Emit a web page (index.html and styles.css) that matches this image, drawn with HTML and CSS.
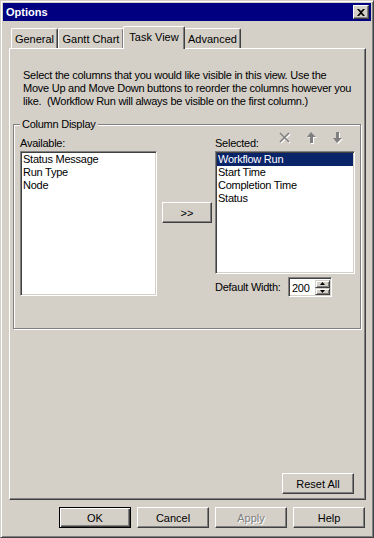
FILE: index.html
```html
<!DOCTYPE html>
<html lang="en">
<head>
    <meta charset="UTF-8">
    <title>Options</title>
    <link rel="stylesheet" href="styles.css">
</head>
<body>
    <div class="window">
        <div class="titlebar">
            <span class="title">Options</span>
            <button class="close-btn">
                <svg width="8" height="7" viewBox="0 0 8 7"><path d="M0 0h2l2 2 2-2h2L5 3.5 8 7H6L4 5 2 7H0l3-3.5z" fill="#000"/></svg>
            </button>
        </div>
        <div class="client">
            <div class="tabs">
                <div class="tab tab-general">General</div>
                <div class="tab tab-gantt">Gantt Chart</div>
                <div class="tab tab-task active">Task View</div>
                <div class="tab tab-advanced">Advanced</div>
            </div>
            <div class="panel">
                <p class="intro">Select the columns that you would like visible in this view. Use the<br>Move Up and Move Down buttons to reorder the columns however you<br>like.&nbsp; (Workflow Run will always be visible on the first column.)</p>
                <div class="group">
                    <span class="group-title">Column Display</span>
                    <div class="columns">
                        <div class="col-available">
                            <div class="field-label">Available:</div>
                            <ul class="listbox available-list">
                                <li>Status Message</li>
                                <li>Run Type</li>
                                <li>Node</li>
                            </ul>
                        </div>
                        <div class="col-move">
                            <button class="btn move-btn">&gt;&gt;</button>
                        </div>
                        <div class="col-selected">
                            <div class="selected-head">
                                <div class="field-label">Selected:</div>
                                <div class="tools">
                                    <svg class="tool" width="16" height="14" viewBox="0 0 16 14">
                                        <path d="M4 3l9 9M13 3l-9 9" stroke="#fff" stroke-width="1.6"/>
                                        <path d="M3 2l9 9M12 2l-9 9" stroke="#808080" stroke-width="1.6"/>
                                    </svg>
                                    <svg class="tool" width="16" height="14" viewBox="0 0 16 14">
                                        <path d="M9 2l5 5h-3v6H8V7H5z" fill="#fff"/>
                                        <path d="M8 1l5 5h-3v6H7V6H4z" fill="#808080"/>
                                    </svg>
                                    <svg class="tool" width="16" height="14" viewBox="0 0 16 14">
                                        <path d="M9 13l5-5h-3V2H8v6H5z" fill="#fff"/>
                                        <path d="M8 12l5-5h-3V1H7v6H4z" fill="#808080"/>
                                    </svg>
                                </div>
                            </div>
                            <ul class="listbox selected-list">
                                <li class="current">Workflow Run</li>
                                <li>Start Time</li>
                                <li>Completion Time</li>
                                <li>Status</li>
                            </ul>
                            <div class="width-row">
                                <span class="width-label">Default Width:</span>
                                <div class="spin">
                                    <span class="spin-value">200</span>
                                    <div class="spin-btns">
                                        <span class="spin-btn"><svg width="5" height="3" viewBox="0 0 5 3"><path d="M2.5 0L5 3H0z" fill="#000"/></svg></span>
                                        <span class="spin-btn"><svg width="5" height="3" viewBox="0 0 5 3"><path d="M0 0h5L2.5 3z" fill="#000"/></svg></span>
                                    </div>
                                </div>
                            </div>
                        </div>
                    </div>
                </div>
                <div class="panel-footer">
                    <button class="btn">Reset All</button>
                </div>
            </div>
            <div class="dialog-buttons">
                <button class="btn btn-default">OK</button>
                <button class="btn">Cancel</button>
                <button class="btn disabled">Apply</button>
                <button class="btn">Help</button>
            </div>
        </div>
    </div>
</body>
</html>
```

FILE: styles.css
```css
* {
    box-sizing: border-box;
}
body {
    margin: 0;
    background: #d4d0c8;
    font-family: "Liberation Sans", Arial, sans-serif;
    font-size: 11px;
    letter-spacing: -0.25px;
    color: #000;
}
.window {
    width: 374px;
    height: 538px;
    display: flex;
    flex-direction: column;
    padding: 2px;
    border: 1px solid;
    border-color: #d4d0c8 #404040 #404040 #d4d0c8;
    box-shadow: inset 1px 1px #fff, inset -1px -1px #808080;
}
.titlebar {
    height: 18px;
    display: flex;
    align-items: center;
    justify-content: space-between;
    padding: 0 2px 0 3px;
    background: #000080;
    color: #fff;
    font-weight: bold;
    letter-spacing: 0;
}
.close-btn {
    width: 16px;
    height: 14px;
    padding: 0;
    display: flex;
    align-items: center;
    justify-content: center;
    background: #d4d0c8;
    border: 1px solid;
    border-color: #fff #404040 #404040 #fff;
    box-shadow: inset -1px -1px #808080;
}
.client {
    flex: 1;
    display: flex;
    flex-direction: column;
    padding: 5px 5px 0 6px;
}
.tabs {
    height: 22px;
    display: flex;
    align-items: flex-end;
    padding-left: 2px;
}
.tab {
    height: 20px;
    padding-top: 4px;
    line-height: 13px;
    text-align: center;
    letter-spacing: 0;
    border-top: 1px solid #fff;
    border-left: 1px solid #fff;
    border-right: 1px solid #404040;
    border-radius: 2px 2px 0 0;
    box-shadow: inset -1px 0 #808080;
}
.tab-general { width: 47px; }
.tab-gantt { width: 66px; }
.tab-task { width: 60px; }
.tab-advanced { width: 57px; }
.tab.active {
    position: relative;
    z-index: 2;
    height: 23px;
    width: 62px;
    margin: 0 -1px -1px;
    padding-top: 4px;
    background: #d4d0c8;
}
.panel {
    height: 452px;
    display: flex;
    flex-direction: column;
    padding: 20px 4px 5px 3px;
    border: 1px solid;
    border-color: #fff #404040 #404040 #fff;
    box-shadow: inset -1px -1px #808080;
}
.intro {
    margin: 0 0 0 10px;
    line-height: 13px;
    white-space: nowrap;
}
.group {
    position: relative;
    height: 205px;
    margin-top: 16px;
    padding: 12px 5px 0 6px;
    border: 1px solid #808080;
    box-shadow: 1px 1px #fff, inset 1px 1px #fff;
}
.group-title {
    position: absolute;
    top: -7px;
    left: 6px;
    padding: 0 2px;
    line-height: 13px;
    background: #d4d0c8;
}
.columns {
    display: flex;
    align-items: flex-start;
}
.field-label {
    height: 14px;
    line-height: 13px;
}
.col-available {
    width: 137px;
}
.col-move {
    margin-left: 5px;
    padding-top: 65px;
}
.col-selected {
    width: 140px;
    margin-left: 3px;
}
.selected-head {
    height: 14px;
    display: flex;
    align-items: flex-end;
    justify-content: space-between;
}
.tools {
    display: flex;
    gap: 10px;
    margin: 0 10px 6px 0;
}
.tool {
    display: block;
}
.listbox {
    margin: 0;
    padding: 1px;
    list-style: none;
    background: #fff;
    border: 1px solid;
    border-color: #808080 #fff #fff #808080;
    box-shadow: inset 1px 1px #404040, inset -1px -1px #d4d0c8;
}
.listbox li {
    height: 13px;
    line-height: 13px;
    padding-left: 1px;
    white-space: nowrap;
}
.listbox li.current {
    background: #0a246a;
    color: #fff;
}
.available-list {
    height: 145px;
}
.selected-list {
    height: 123px;
}
.width-row {
    display: flex;
    align-items: center;
    margin-top: 3px;
}
.width-label {
    width: 73px;
}
.spin {
    width: 44px;
    height: 20px;
    display: flex;
    align-items: center;
    justify-content: space-between;
    padding: 2px 1px 1px 3px;
    background: #fff;
    border: 1px solid;
    border-color: #808080 #fff #fff #808080;
    box-shadow: inset 1px 1px #404040, inset -1px -1px #d4d0c8;
}
.spin-btns {
    display: flex;
    flex-direction: column;
    align-self: stretch;
}
.spin-btn {
    width: 15px;
    flex: 1;
    display: flex;
    align-items: center;
    justify-content: center;
    background: #d4d0c8;
    border: 1px solid;
    border-color: #d4d0c8 #404040 #404040 #d4d0c8;
    box-shadow: inset 1px 1px #fff, inset -1px -1px #808080;
}
.spin-btn svg {
    display: block;
}
.btn {
    width: 72px;
    height: 21px;
    padding: 0;
    font: inherit;
    letter-spacing: 0;
    color: #000;
    background: #d4d0c8;
    border: 1px solid;
    border-color: #fff #404040 #404040 #fff;
    box-shadow: inset -1px -1px #808080, inset 1px 1px #d4d0c8;
}
.move-btn {
    width: 50px;
}
.btn-default {
    border-color: #000;
    box-shadow: inset 1px 1px #fff, inset -1px -1px #404040, inset -2px -2px #808080;
}
.btn.disabled {
    color: #808080;
    text-shadow: 1px 1px #fff;
}
.panel-footer {
    margin-top: auto;
    display: flex;
    justify-content: flex-end;
    padding-right: 7px;
}
.dialog-buttons {
    display: flex;
    justify-content: flex-end;
    gap: 6px;
    margin-top: 7px;
    padding-right: 1px;
}
```
